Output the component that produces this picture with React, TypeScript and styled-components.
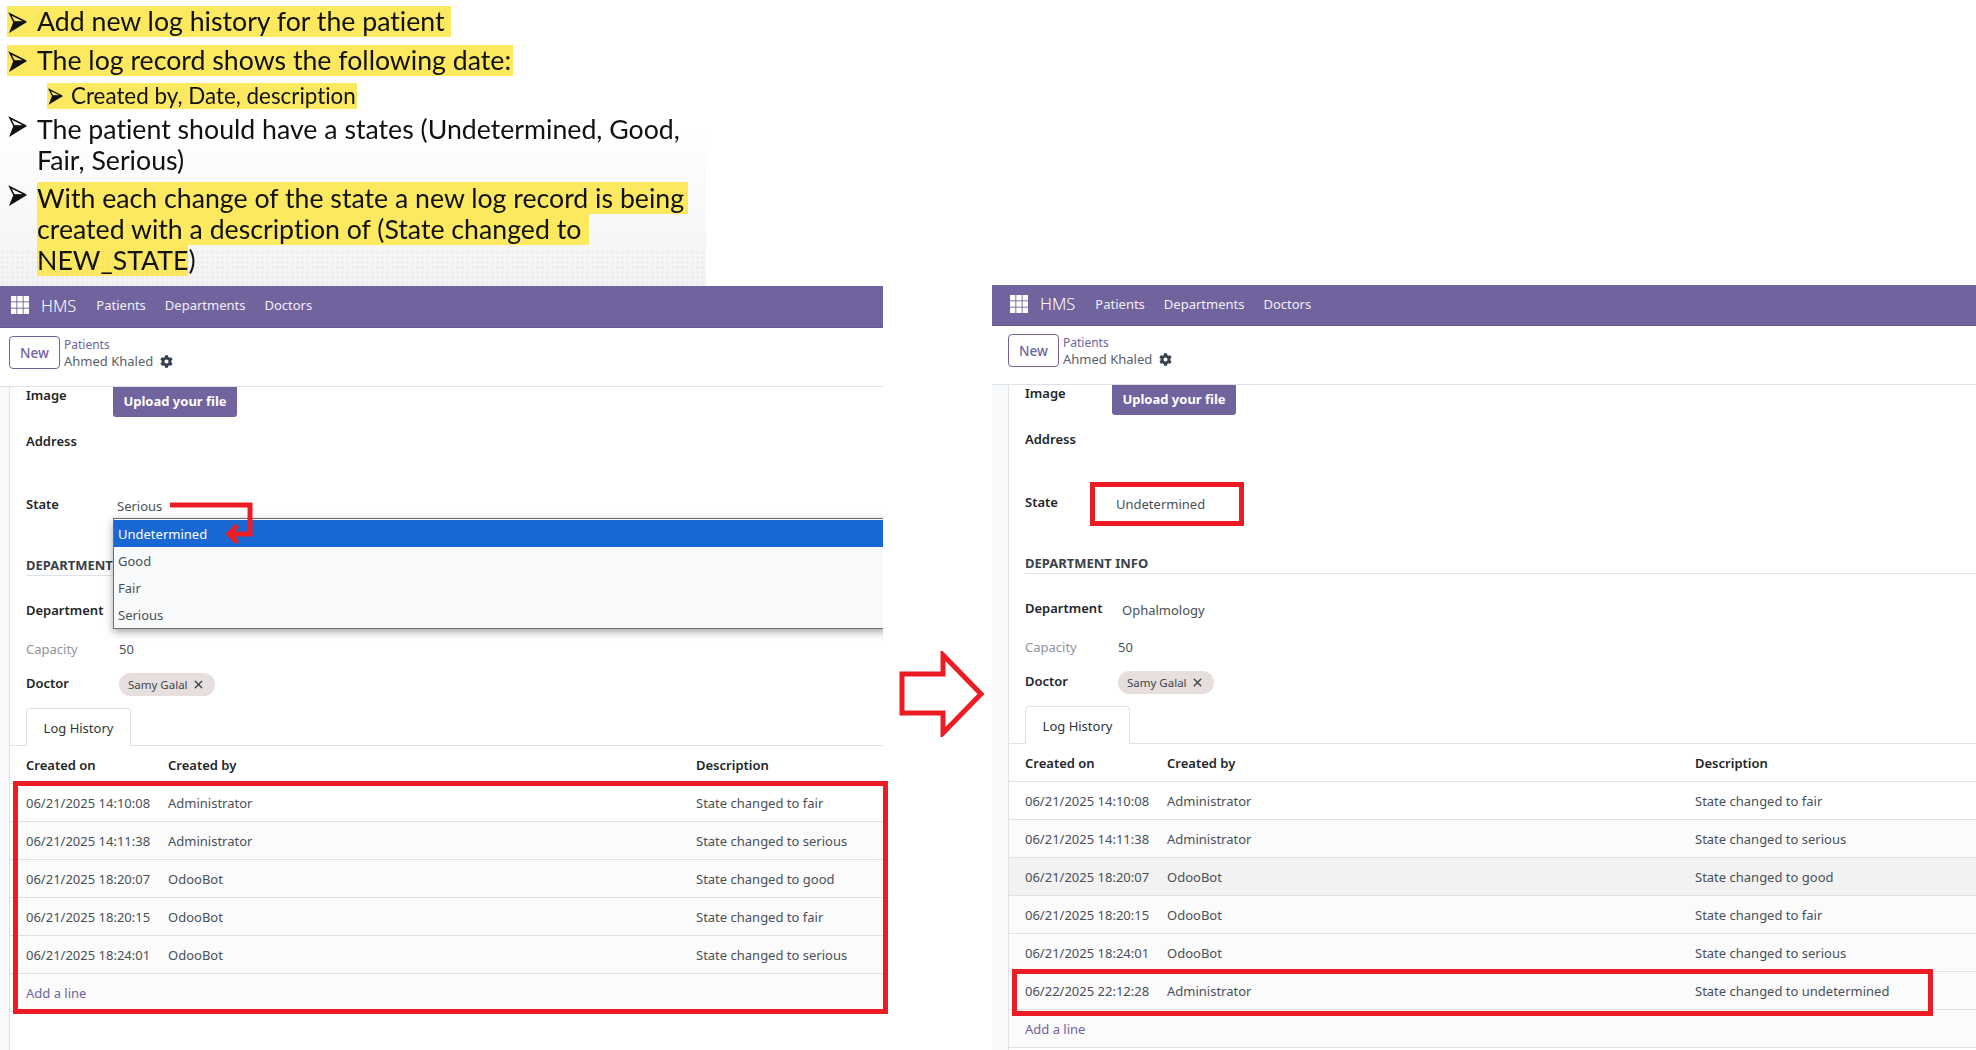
import React from 'react';
import styled, { createGlobalStyle } from 'styled-components';
import { FaCog } from 'react-icons/fa';
import { X } from 'lucide-react';

interface LogEntry {
  date: string;
  user: string;
  text: string;
  hover?: boolean;
}

const PURPLE = '#71639e';
const RED = '#ed1c24';

const baseLog: LogEntry[] = [
  { date: '06/21/2025 14:10:08', user: 'Administrator', text: 'State changed to fair' },
  { date: '06/21/2025 14:11:38', user: 'Administrator', text: 'State changed to serious' },
  { date: '06/21/2025 18:20:07', user: 'OdooBot', text: 'State changed to good' },
  { date: '06/21/2025 18:20:15', user: 'OdooBot', text: 'State changed to fair' },
  { date: '06/21/2025 18:24:01', user: 'OdooBot', text: 'State changed to serious' },
];

const GlobalStyle = createGlobalStyle`
  html, body {
    margin: 0;
    padding: 0;
    background: #fff;
  }
  * {
    box-sizing: border-box;
  }
`;

const Page = styled.div`
  width: 1976px;
  height: 1050px;
  overflow: hidden;
  background: #fff;
  font-family: 'Noto Sans', 'Open Sans', sans-serif;
`;

/* slide pasted on top */
const Slide = styled.div`
  position: relative;
  width: 706px;
  height: 286px;
  padding: 6px 0 0 7px;
  font-family: Lato, 'Open Sans', sans-serif;
  font-variant-ligatures: none;
  color: #111;
  background: linear-gradient(#fff 45%, #f3f3f5 100%);
  filter: blur(0.35px);
  &::after {
    content: '';
    position: absolute;
    left: 0;
    right: 0;
    bottom: 0;
    height: 36px;
    background-image: radial-gradient(circle, rgba(120, 120, 120, 0.08) 1px, transparent 1.4px);
    background-size: 5px 5px;
    pointer-events: none;
  }
`;

const Bullet = styled.div<{ $gap: number; $sub?: boolean }>`
  display: flex;
  align-items: flex-start;
  margin-top: ${p => p.$gap}px;
  margin-left: ${p => (p.$sub ? 40 : 0)}px;
  font-size: ${p => (p.$sub ? 22.4 : 26.7)}px;
  line-height: ${p => (p.$sub ? 26 : 31)}px;
`;

const Highlight = styled.span<{ $tail?: number }>`
  padding-right: ${p => p.$tail ?? 4}px;
  background: #fce95f;
`;

const BulletBar = styled(Highlight)`
  display: flex;
  align-items: center;
`;

const BulletMark = styled.svg<{ $width: number }>`
  flex: none;
  width: ${p => p.$width}px;
  height: ${p => (p.$width * 22) / 30}px;
  margin-top: 2px;
`;

const ArrowHead = ({ width }: { width: number }) => (
  <BulletMark $width={width} viewBox="0 0 30 22">
    <path d="M3 2 L19 10 L7 10 Z" fill="none" stroke="#111" strokeWidth="1.6" strokeLinejoin="miter" />
    <path d="M2 21 L20 10 L6.5 9.5 Z" fill="#111" />
  </BulletMark>
);

/* the two odoo screenshots */
const Shots = styled.div`
  position: relative;
  display: flex;
  align-items: flex-start;
  height: 764px;
`;

const Crop = styled.div<{ $width: number; $lift: number }>`
  flex: none;
  width: ${p => p.$width}px;
  height: 790px;
  margin-top: ${p => -p.$lift}px;
  overflow: hidden;
  background: #fff;
`;

const Sheet = styled.div<{ $shift: number }>`
  position: relative;
  width: 984px;
  margin-left: ${p => -p.$shift}px;
  font-size: 13px;
  color: #495057;
`;

const NavBar = styled.div<{ $height: number }>`
  display: flex;
  align-items: center;
  height: ${p => p.$height}px;
  padding: 0 0 3px 18px;
  background: ${PURPLE};
  color: #fff;
  border-bottom: 1px solid #655990;
`;

const Brand = styled.span`
  margin: 0 20px 0 12px;
  font-size: 16.5px;
  font-weight: 300;
`;

const NavLink = styled.span`
  margin-right: 19px;
  font-size: 13px;
  color: #f1eff6;
`;

const ControlPanel = styled.div`
  display: flex;
  align-items: flex-start;
  height: 59px;
  padding: 8px 0 0 16px;
  background: #fff;
  border-bottom: 1px solid #dee2e6;
`;

const NewButton = styled.button`
  width: 51px;
  height: 33px;
  padding: 0;
  margin-right: 4px;
  background: #fff;
  border: 1px solid ${PURPLE};
  border-radius: 4px;
  color: ${PURPLE};
  font: 500 13.5px 'Noto Sans', sans-serif;
`;

const Crumbs = styled.div`
  display: flex;
  flex-direction: column;
  line-height: 17px;
`;

const CrumbLink = styled.span`
  color: ${PURPLE};
  font-size: 12px;
`;

const CrumbName = styled.span`
  display: flex;
  align-items: center;
  gap: 7px;
  font-size: 13px;
  color: #5a6168;
`;

const FormArea = styled.div`
  position: relative;
  min-height: 670px;
  margin-left: 16px;
  background: #fff;
  border-left: 1px solid #e0e2e6;
  box-shadow: -16px 0 0 #f9fafb;
`;

const FormRow = styled.div<{ $height: number }>`
  display: flex;
  height: ${p => p.$height}px;
  padding-left: 16px;
`;

const Label = styled.div<{ $muted?: boolean }>`
  flex: none;
  width: 87px;
  line-height: 16px;
  font-weight: ${p => (p.$muted ? 400 : 600)};
  color: ${p => (p.$muted ? '#8f959b' : '#212529')};
`;

const Value = styled.div<{ $pad: number; $drop?: number }>`
  padding: ${p => p.$drop ?? 0}px 0 0 ${p => p.$pad}px;
  line-height: 17px;
`;

const UploadButton = styled.button`
  width: 124px;
  height: 30px;
  padding: 0 0 2px;
  background: ${PURPLE};
  border: 0;
  border-radius: 0 0 3px 3px;
  color: #fff;
  font: 700 13px 'Noto Sans', sans-serif;
`;

const SectionTitle = styled.div`
  height: 26px;
  margin: 0 0 26px 16px;
  padding-top: 6px;
  font-size: 13px;
  font-weight: 700;
  color: #3b4149;
  border-bottom: 1px solid #dee2e6;
`;

const Chip = styled.span`
  display: inline-flex;
  align-items: center;
  gap: 4px;
  height: 23px;
  margin-top: -2px;
  padding: 0 10px 0 9px;
  border-radius: 12px;
  background: #e7dfdd;
  font-size: 11.5px;
  color: #40464c;
`;

const Tabs = styled.div`
  display: flex;
  height: 38px;
  padding-left: 16px;
  border-bottom: 1px solid #dee2e6;
`;

const Tab = styled.div`
  display: flex;
  align-items: center;
  justify-content: center;
  width: 105px;
  height: 38px;
  background: #fff;
  border: 1px solid #dee2e6;
  border-bottom: 0;
  border-radius: 4px 4px 0 0;
  font-size: 13px;
  color: #2f343a;
`;

const LogRow = styled.div<{ $tone?: 'white' | 'soft' | 'hover' }>`
  display: grid;
  grid-template-columns: 142px 528px 1fr;
  align-items: center;
  height: 38px;
  padding: 1px 0 0 16px;
  border-bottom: 1px solid #dee2e6;
  background: ${p => (p.$tone === 'hover' ? '#f2f2f2' : p.$tone === 'soft' ? '#fbfbfc' : '#fff')};
`;

const HeadRow = styled(LogRow)`
  font-weight: 600;
  color: #212529;
`;

const AddLine = styled.span`
  color: ${PURPLE};
`;

const Dropdown = styled.div`
  position: absolute;
  left: 120px;
  top: 232px;
  width: 864px;
  height: 111px;
  padding: 1px 0;
  background: #f8f9fa;
  border: 1px solid #6c6c72;
  border-right: 0;
  box-shadow: 0 3px 8px rgba(0, 0, 0, 0.35);
  z-index: 2;
`;

const Option = styled.div<{ $active?: boolean }>`
  display: flex;
  align-items: center;
  height: 27px;
  padding-left: 4px;
  background: ${p => (p.$active ? '#1967d2' : 'transparent')};
  color: ${p => (p.$active ? '#fff' : '#495057')};
`;

/* red marks drawn over the screenshots */
const MarkBox = styled.div<{ $left: number; $top: number; $width: number; $height: number }>`
  position: absolute;
  left: ${p => p.$left}px;
  top: ${p => p.$top}px;
  width: ${p => p.$width}px;
  height: ${p => p.$height}px;
  border: 5px solid ${RED};
  z-index: 3;
`;

const ElbowArrow = styled.svg`
  position: absolute;
  left: 165px;
  top: 213px;
  z-index: 3;
`;

const ArrowSlot = styled.div`
  flex: none;
  width: 109px;
  padding: 365px 0 0 16px;
`;

const AppGrid = () => (
  <svg width="18" height="18" viewBox="0 0 18 18" fill="#fff">
    {[0, 6.3, 12.6].flatMap(y =>
      [0, 6.3, 12.6].map(x => <rect key={`${x}-${y}`} x={x} y={y} width="5.4" height="5.4" />),
    )}
  </svg>
);

interface HmsSheetProps {
  shift: number;
  lift: number;
  width: number;
  navHeight: number;
  state: string;
  log: LogEntry[];
  open?: boolean;
}

const HmsSheet: React.FC<HmsSheetProps> = ({ shift, lift, width, navHeight, state, log, open }) => (
  <Crop $width={width} $lift={lift}>
    <Sheet $shift={shift}>
      <NavBar $height={navHeight}>
        <AppGrid />
        <Brand>HMS</Brand>
        <NavLink>Patients</NavLink>
        <NavLink>Departments</NavLink>
        <NavLink>Doctors</NavLink>
      </NavBar>
      <ControlPanel>
        <NewButton>New</NewButton>
        <Crumbs>
          <CrumbLink>Patients</CrumbLink>
          <CrumbName>
            Ahmed Khaled <FaCog size={13} color="#374151" />
          </CrumbName>
        </Crumbs>
      </ControlPanel>
      <FormArea>
        <FormRow $height={46}>
          <Label>Image</Label>
          <UploadButton>Upload your file</UploadButton>
        </FormRow>
        <FormRow $height={63}>
          <Label>Address</Label>
        </FormRow>
        <FormRow $height={54}>
          <Label>State</Label>
          <Value $pad={4} $drop={2}>
            {state}
          </Value>
        </FormRow>
        <SectionTitle>DEPARTMENT INFO</SectionTitle>
        <FormRow $height={39}>
          <Label>Department</Label>
          <Value $pad={10} $drop={2}>
            Ophalmology
          </Value>
        </FormRow>
        <FormRow $height={34}>
          <Label $muted>Capacity</Label>
          <Value $pad={6}>50</Value>
        </FormRow>
        <FormRow $height={33}>
          <Label>Doctor</Label>
          <Value $pad={6}>
            <Chip>
              Samy Galal <X size={13} strokeWidth={2.6} />
            </Chip>
          </Value>
        </FormRow>
        <Tabs>
          <Tab>Log History</Tab>
        </Tabs>
        <HeadRow>
          <span>Created on</span>
          <span>Created by</span>
          <span>Description</span>
        </HeadRow>
        {log.map((entry, index) => (
          <LogRow key={entry.date} $tone={entry.hover ? 'hover' : index === 0 ? 'white' : 'soft'}>
            <span>{entry.date}</span>
            <span>{entry.user}</span>
            <span>{entry.text}</span>
          </LogRow>
        ))}
        <LogRow $tone="soft">
          <AddLine>Add a line</AddLine>
        </LogRow>
      </FormArea>
      {open && (
        <Dropdown>
          <Option $active>Undetermined</Option>
          <Option>Good</Option>
          <Option>Fair</Option>
          <Option>Serious</Option>
        </Dropdown>
      )}
    </Sheet>
  </Crop>
);

const App: React.FC = () => (
  <Page>
    <GlobalStyle />
    <Slide>
      <Bullet $gap={0}>
        <BulletBar $tail={6}>
          <ArrowHead width={30} />
          Add new log history for the patient
        </BulletBar>
      </Bullet>
      <Bullet $gap={8}>
        <BulletBar $tail={2}>
          <ArrowHead width={30} />
          The log record shows the following date:
        </BulletBar>
      </Bullet>
      <Bullet $gap={7} $sub>
        <BulletBar $tail={1}>
          <ArrowHead width={24} />
          Created by, Date, description
        </BulletBar>
      </Bullet>
      <Bullet $gap={5}>
        <ArrowHead width={30} />
        <div>
          The patient should have a states (Undetermined, Good,
          <br />
          Fair, Serious)
        </div>
      </Bullet>
      <Bullet $gap={7}>
        <ArrowHead width={30} />
        <div>
          <Highlight>With each change of the state a new log record is being</Highlight>
          <br />
          <Highlight $tail={8}>created with a description of (State changed to</Highlight>
          <br />
          <Highlight $tail={0}>NEW_STATE</Highlight>)
        </div>
      </Bullet>
    </Slide>
    <Shots>
      <HmsSheet shift={7} lift={0} width={883} navHeight={42} state="Serious" log={baseLog} open />
      <ArrowSlot>
        <svg width="86" height="86" viewBox="0 0 86 86">
          <path d="M3 23 H44 V4 L82 43 L44 82 V62 H3 Z" fill="#fff" stroke={RED} strokeWidth="5" />
        </svg>
      </ArrowSlot>
      <HmsSheet
        shift={0}
        lift={1}
        width={984}
        navHeight={41}
        state="Undetermined"
        log={[
          ...baseLog.map(e => (e.user === 'OdooBot' && e.text.endsWith('good') ? { ...e, hover: true } : e)),
          { date: '06/22/2025 22:12:28', user: 'Administrator', text: 'State changed to undetermined' },
        ]}
      />
      <ElbowArrow width="95" height="60" viewBox="0 0 95 60">
        <path d="M5 6 H85 V35 H64" fill="none" stroke={RED} strokeWidth="5" />
        <path d="M71 28 L64 35 L71 42" fill="none" stroke={RED} strokeWidth="5" strokeLinecap="round" />
      </ElbowArrow>
      <MarkBox $left={13} $top={495} $width={875} $height={233} />
      <MarkBox $left={1090} $top={196} $width={154} $height={44} />
      <MarkBox $left={1012} $top={683} $width={921} $height={47} />
    </Shots>
  </Page>
);

export default App;
